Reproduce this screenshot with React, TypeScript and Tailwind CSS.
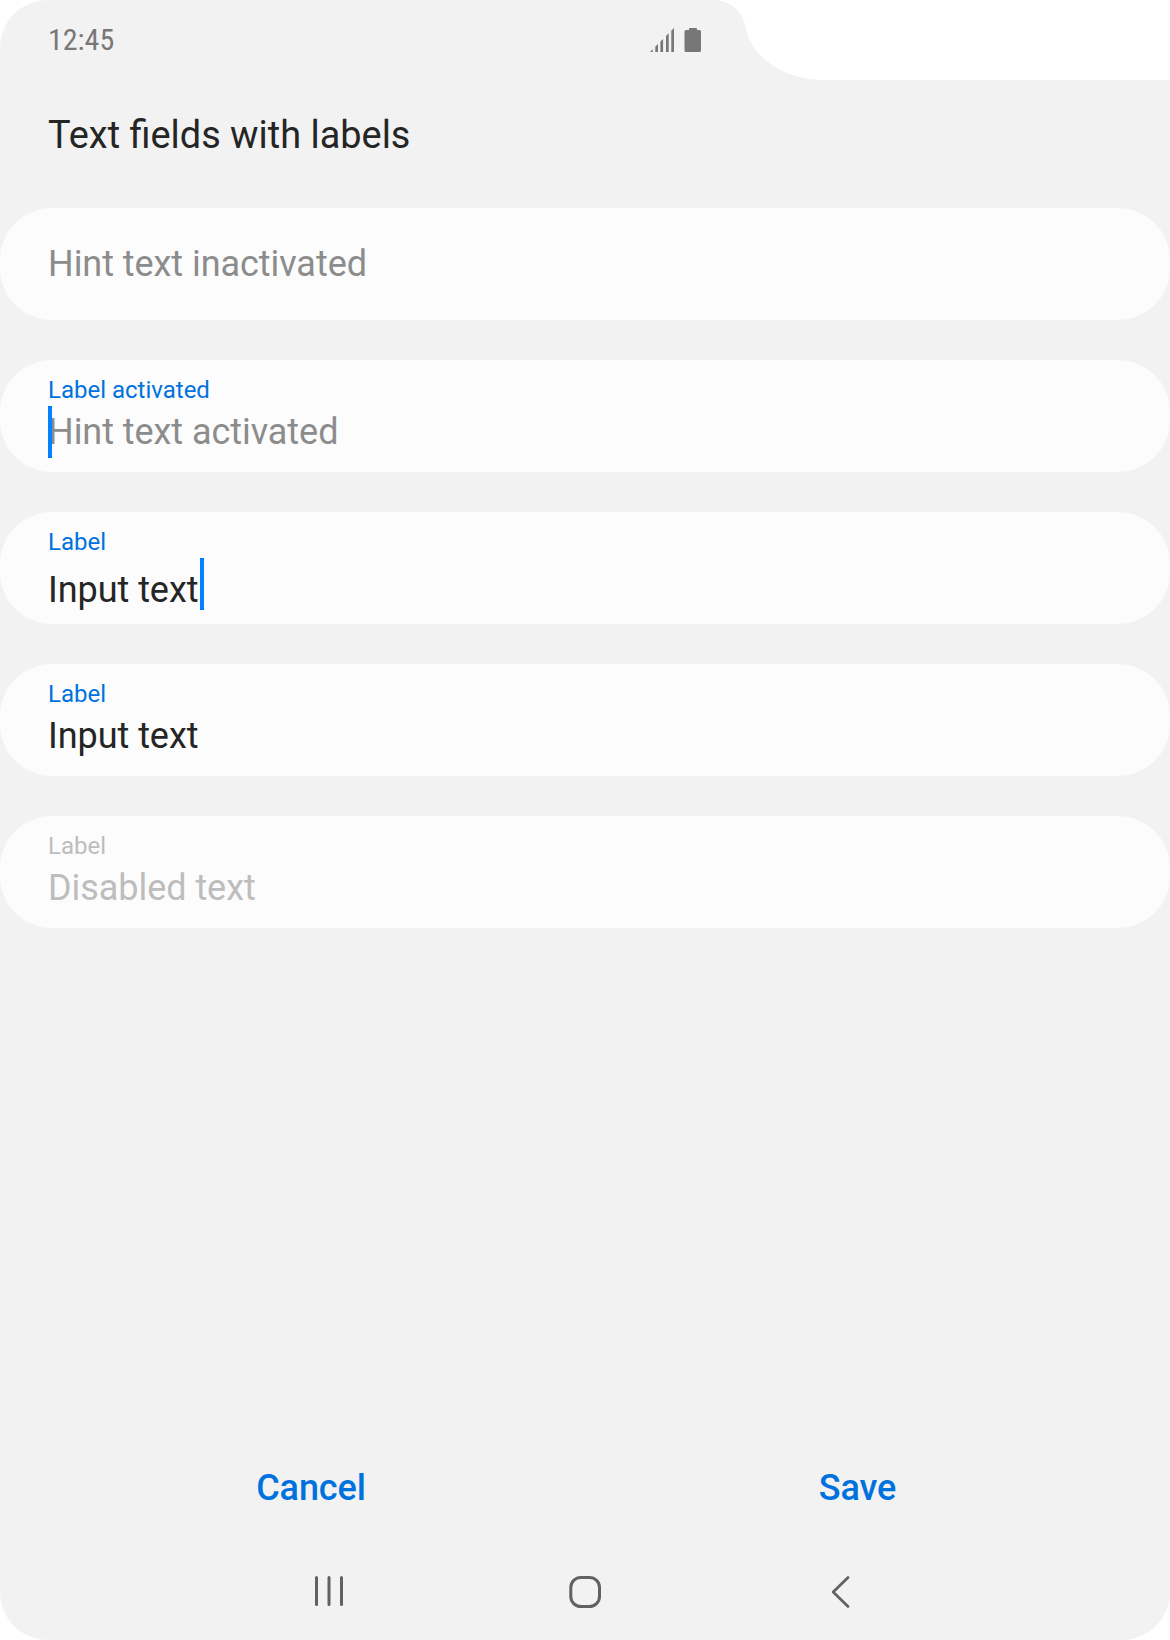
import React from "react";

type FieldProps = { label?: string; text: string; labelClass?: string; textClass: string; caret?: "start" | "end" };

function Field({ label, text, labelClass = "", textClass, caret }: FieldProps) {
  return (
    <div className="flex h-[112px] shrink-0 flex-col items-start rounded-[52px] bg-[#fcfcfc] pl-12">
      {label && <div className={`mt-4 text-2xl leading-7 ${labelClass}`}>{label}</div>}
      <div className={`relative text-[36px] leading-[42px] tracking-[-0.05px] ${label ? (caret === "end" ? "mt-[13px]" : "mt-[7px]") : "mt-[35px]"} ${textClass}`}>
        {text}
        {caret === "start" && <span className="absolute left-0 top-[-5px] h-[52px] w-1 bg-[#0381fe]" />}
        {caret === "end" && <span className="absolute left-[152px] top-[-11px] h-[52px] w-1 bg-[#0381fe]" />}
      </div>
    </div>
  );
}

function StatusIcons() {
  return (
    <svg width="51" height="24" viewBox="0 0 51 24" fill="#777777">
      <path d="M0 24L2.7 21.3V24ZM5.3 24V18.7L8 16V24ZM10.4 24V13.6L13.1 10.9V24ZM16 24V8L18.7 5.3V24ZM21.3 24V2.7L24 0V24Z" />
      <path d="M39 2V1Q39 0 40 0H46Q47 0 47 1V2H49.5Q51 2 51 3.5V22.5Q51 24 49.5 24H36Q34.5 24 34.5 22.5V3.5Q34.5 2 36 2Z" />
    </svg>
  );
}

export default function App() {
  return (
    <div className="relative flex h-[1640px] w-[1170px] flex-col overflow-hidden bg-white font-['Roboto',sans-serif]">
      <svg className="absolute inset-0" width="1170" height="1640" viewBox="0 0 1170 1640">
        <path d="M48 0H712C730 0 743 10 746 29C752 56 782 80 824 80H1170V1592A48 48 0 0 1 1122 1640H48A48 48 0 0 1 0 1592V48A48 48 0 0 1 48 0Z" fill="#f2f2f2" />
      </svg>
      <header className="relative flex h-20 w-[749px] items-center justify-between px-12 text-[#777777]">
        <span className="mb-[2px] font-['Roboto_Condensed','Roboto',sans-serif] text-[30px]">12:45</span>
        <StatusIcons />
      </header>
      <h1 className="relative h-32 pl-12 pt-8 text-[37.9px] leading-[46px] text-[#252525]">Text fields with labels</h1>
      <main className="relative flex flex-col gap-10">
        <Field text="Hint text inactivated" textClass="text-[#8c8c8c]" />
        <Field label="Label activated" text="Hint text activated" labelClass="text-[#0072de]" textClass="text-[#8c8c8c]" caret="start" />
        <Field label="Label" text="Input text" labelClass="text-[#0072de]" textClass="text-[#252525]" caret="end" />
        <Field label="Label" text="Input text" labelClass="text-[#0072de]" textClass="text-[#252525]" />
        <Field label="Label" text="Disabled text" labelClass="text-[#bdbdbd]" textClass="text-[#bdbdbd]" />
      </main>
      <div className="relative mt-auto flex h-[112px] pl-10 pt-[27px] text-[36px] font-medium leading-[42px] tracking-[-0.1px] text-[#0072de]">
        <button className="w-[542px] self-start">Cancel</button>
        <button className="w-[551px] self-start">Save</button>
      </div>
      <nav className="relative flex h-[88px] items-start pl-[315px] pt-6">
        <svg width="29" height="32" viewBox="0 0 29 32" fill="none" stroke="#616161" strokeWidth="3" strokeLinecap="round">
          <path d="M1.5 1.5V28.5M14 1.5V28.5M26.5 1.5V28.5" />
        </svg>
        <svg className="ml-[225px]" width="32" height="32" viewBox="0 0 32 32" fill="none" stroke="#616161" strokeWidth="3">
          <rect x="1.8" y="1.5" width="28.7" height="29" rx="10" />
        </svg>
        <svg className="ml-[230px]" width="19" height="32" viewBox="0 0 19 32" fill="none" stroke="#616161" strokeWidth="2.7" strokeLinecap="round" strokeLinejoin="round">
          <path d="M17 1.5L2.2 16L17 30.5" />
        </svg>
      </nav>
    </div>
  );
}
